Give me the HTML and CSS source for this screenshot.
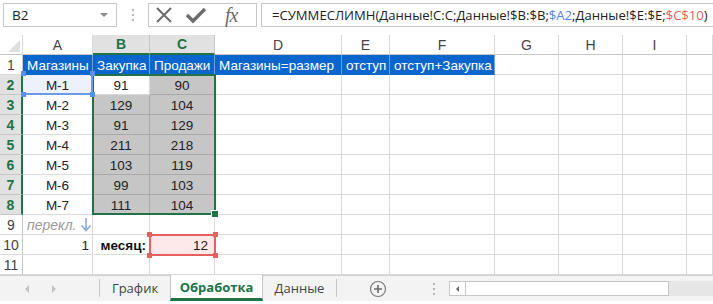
FILE: index.html
```html
<!DOCTYPE html>
<html>
<head>
<meta charset="utf-8">
<link rel="stylesheet" href="styles.css">
</head>
<body>
<div class="app">
  <div class="fbar">
    <div class="namebox"><span class="nb-text">B2</span><span class="nb-arrow"></span></div>
    <div class="vdots"><i></i><i></i><i></i></div>
    <div class="iconbox">
      <svg class="ic" width="22" height="22" viewBox="0 0 22 22"><path d="M4 4 L18 18 M18 4 L4 18" stroke="#6d6d6d" stroke-width="2" fill="none"/></svg>
      <svg class="ic" width="24" height="22" viewBox="0 0 24 22"><path d="M3 11 L9 17 L21 5" stroke="#6d6d6d" stroke-width="3.4" fill="none"/></svg>
      <span class="fx">fx</span>
    </div>
    <div class="formula">=СУММЕСЛИМН(Данные!C:C;Данные!$B:$B;<span class="ref-blue">$A2</span>;Данные!$E:$E;<span class="ref-red">$C$10</span>)</div>
  </div>

  <div class="sheet">
    <div class="grid">
      <!-- header row -->
      <div class="c hd corner"><span class="tri"></span></div>
      <div class="c hd">A</div>
      <div class="c hd sel">B</div>
      <div class="c hd sel">C</div>
      <div class="c hd">D</div>
      <div class="c hd">E</div>
      <div class="c hd">F</div>
      <div class="c hd">G</div>
      <div class="c hd">H</div>
      <div class="c hd">I</div>
      <div class="c hd last"></div>

      <!-- row 1 -->
      <div class="c rh">1</div>
      <div class="c blue">Магазины</div>
      <div class="c blue">Закупка</div>
      <div class="c blue">Продажи</div>
      <div class="c blue">Магазины=размер</div>
      <div class="c blue">отступ</div>
      <div class="c blue">отступ+Закупка</div>
      <div class="c"></div><div class="c"></div><div class="c"></div><div class="c"></div>

      <!-- row 2 -->
      <div class="c rh rsel">2</div>
      <div class="c ctr a2">М-1</div>
      <div class="c ctr">91</div>
      <div class="c ctr gr">90</div>
      <div class="c"></div><div class="c"></div><div class="c"></div><div class="c"></div><div class="c"></div><div class="c"></div><div class="c"></div>

      <!-- row 3 -->
      <div class="c rh rsel">3</div>
      <div class="c ctr">М-2</div>
      <div class="c ctr gr">129</div>
      <div class="c ctr gr">104</div>
      <div class="c"></div><div class="c"></div><div class="c"></div><div class="c"></div><div class="c"></div><div class="c"></div><div class="c"></div>

      <!-- row 4 -->
      <div class="c rh rsel">4</div>
      <div class="c ctr">М-3</div>
      <div class="c ctr gr">91</div>
      <div class="c ctr gr">129</div>
      <div class="c"></div><div class="c"></div><div class="c"></div><div class="c"></div><div class="c"></div><div class="c"></div><div class="c"></div>

      <!-- row 5 -->
      <div class="c rh rsel">5</div>
      <div class="c ctr">М-4</div>
      <div class="c ctr gr">211</div>
      <div class="c ctr gr">218</div>
      <div class="c"></div><div class="c"></div><div class="c"></div><div class="c"></div><div class="c"></div><div class="c"></div><div class="c"></div>

      <!-- row 6 -->
      <div class="c rh rsel">6</div>
      <div class="c ctr">М-5</div>
      <div class="c ctr gr">103</div>
      <div class="c ctr gr">119</div>
      <div class="c"></div><div class="c"></div><div class="c"></div><div class="c"></div><div class="c"></div><div class="c"></div><div class="c"></div>

      <!-- row 7 -->
      <div class="c rh rsel">7</div>
      <div class="c ctr">М-6</div>
      <div class="c ctr gr">99</div>
      <div class="c ctr gr">103</div>
      <div class="c"></div><div class="c"></div><div class="c"></div><div class="c"></div><div class="c"></div><div class="c"></div><div class="c"></div>

      <!-- row 8 -->
      <div class="c rh rsel">8</div>
      <div class="c ctr">М-7</div>
      <div class="c ctr gr">111</div>
      <div class="c ctr gr">104</div>
      <div class="c"></div><div class="c"></div><div class="c"></div><div class="c"></div><div class="c"></div><div class="c"></div><div class="c"></div>

      <!-- row 9 -->
      <div class="c rh">9</div>
      <div class="c note">перекл.<svg class="arr" width="12" height="15" viewBox="0 0 12 15"><path d="M6 1 V13 M1.5 8.5 L6 13.5 L10.5 8.5" stroke="#8eaad6" stroke-width="1.6" fill="none"/></svg></div>
      <div class="c"></div><div class="c"></div><div class="c"></div><div class="c"></div><div class="c"></div><div class="c"></div><div class="c"></div><div class="c"></div><div class="c"></div>

      <!-- row 10 -->
      <div class="c rh">10</div>
      <div class="c rt">1</div>
      <div class="c rt bold">месяц:</div>
      <div class="c rt pink">12</div>
      <div class="c"></div><div class="c"></div><div class="c"></div><div class="c"></div><div class="c"></div><div class="c"></div><div class="c"></div>

      <!-- row 11 -->
      <div class="c rh">11</div>
      <div class="c"></div><div class="c"></div><div class="c"></div><div class="c"></div><div class="c"></div><div class="c"></div><div class="c"></div><div class="c"></div><div class="c"></div><div class="c"></div>
    </div>

    <div class="selbox"><span class="handle"></span></div>
    <div class="refbox blue-ref"><i class="k tl"></i><i class="k tr"></i><i class="k bl"></i><i class="k br"></i></div>
    <div class="refbox red-ref"><i class="k tl"></i><i class="k tr"></i><i class="k bl"></i><i class="k br"></i></div>
  </div>

  <div class="tabs">
    <div class="nav">
      <span class="tri-l"></span>
      <span class="tri-r"></span>
    </div>
    <div class="sep"></div>
    <div class="tab">График</div>
    <div class="tab active">Обработка</div>
    <div class="tab">Данные</div>
    <div class="sep"></div>
    <div class="plus">
      <svg width="18" height="18" viewBox="0 0 18 18"><circle cx="9" cy="9" r="7.5" fill="none" stroke="#7a7a7a" stroke-width="1.2"/><path d="M9 5 V13 M5 9 H13" stroke="#6a6a6a" stroke-width="1.6"/></svg>
    </div>
    <div class="hdots"><i></i><i></i><i></i></div>
    <div class="scroll">
      <div class="sc-track"><span class="sc-btn"><span class="tri-s"></span></span></div>
      <div class="sc-rest"></div>
    </div>
  </div>
</div>
</body>
</html>
```

FILE: styles.css
```css
html, body {
  margin: 0;
  padding: 0;
  background: #ffffff;
  overflow: hidden;
}
.app {
  width: 713px;
  height: 304px;
  display: flex;
  flex-direction: column;
  font-family: "Liberation Sans", Arial, sans-serif;
  color: #222;
}

/* formula bar */
.fbar {
  display: flex;
  align-items: flex-start;
  padding: 3px 0 0 3px;
  height: 35px;
  box-sizing: border-box;
  white-space: nowrap;
}
.namebox {
  width: 114px;
  height: 24px;
  box-sizing: border-box;
  border: 1px solid #c6c6c6;
  display: flex;
  align-items: center;
  justify-content: space-between;
  padding: 0 8px 0 8px;
  font-family: "Open Sans", sans-serif;
  font-size: 13.5px;
  color: #222;
}
.nb-arrow {
  width: 0; height: 0;
  border-left: 4px solid transparent;
  border-right: 4px solid transparent;
  border-top: 4px solid #8a8a8a;
}
.vdots {
  width: 31px;
  height: 24px;
  display: flex;
  flex-direction: column;
  align-items: center;
  justify-content: center;
  gap: 3px;
}
.vdots i, .hdots i {
  display: block;
  width: 2px; height: 2px;
  background: #b5b5b5;
}
.iconbox {
  width: 109px;
  height: 24px;
  box-sizing: border-box;
  border: 1px solid #c6c6c6;
  display: flex;
  align-items: center;
  padding-left: 4px;
  gap: 9px;
}
.fx {
  font-family: "Liberation Serif", serif;
  font-style: italic;
  font-size: 20px;
  color: #6d6d6d;
  margin-left: 8px;
  letter-spacing: -1px;
}
.formula {
  margin-left: 4px;
  height: 24px;
  flex: 1;
  box-sizing: border-box;
  border: 1px solid #c6c6c6;
  border-right: none;
  padding: 0 0 0 10px;
  font-family: "Open Sans", sans-serif;
  font-size: 13.1px;
  line-height: 22px;
  color: #222;
  overflow: hidden;
}
.ref-blue { color: #4d86e8; }
.ref-red { color: #e95b5b; }

/* sheet */
.sheet {
  position: relative;
  height: 240px;
  overflow: hidden;
}
.grid {
  display: grid;
  grid-template-columns: 23px 70px 57px 65px 127px 48px 105px 64px 64px 64px 1fr;
  grid-auto-rows: 20px;
  font-size: 13.5px;
}
.c {
  box-sizing: border-box;
  border-right: 1px solid #dadada;
  border-bottom: 1px solid #dadada;
  line-height: 21px;
  padding: 0 3px;
  white-space: nowrap;
  overflow: visible;
}
.hd {
  text-align: center;
  color: #444;
  border-bottom-color: #c6c6c6;
  border-right-color: #dadada;
  font-size: 14px;
  line-height: 20px;
}
.hd.sel {
  background: #e1e1e1;
  color: #217346;
  font-weight: bold;
  border-bottom: 2px solid #217346;
  border-right-color: #c6c6c6;
  line-height: 19px;
}
.corner {
  position: relative;
}
.tri {
  position: absolute;
  right: 2px;
  bottom: 2px;
  width: 0; height: 0;
  border-left: 12px solid transparent;
  border-bottom: 12px solid #dfdfdf;
}
.rh {
  text-align: center;
  color: #444;
  padding: 0;
  font-size: 14px;
  border-right-color: #c6c6c6;
}
.rh.rsel {
  background: #e1e1e1;
  color: #217346;
  font-weight: bold;
  border-right: 2px solid #217346;
  border-bottom-color: #c6c6c6;
}
.blue {
  background: #0a66cc;
  color: #ffffff;
  border-right-color: #6ea2dd;
  border-bottom-color: #0a66cc;
  padding-left: 4px;
}
.ctr { text-align: center; }
.rt { text-align: right; }
.bold { font-weight: bold; color: #111; }
.gr {
  background: #c6c6c6;
  border-right-color: #a9a9a9;
  border-bottom-color: #a9a9a9;
}
.a2 { background: #edf1fb; }
.pink { background: #fde9e9; padding-right: 6px; }
.note {
  font-style: italic;
  color: #9a9a9a;
  padding-left: 4px;
  font-size: 14px;
}
.arr {
  margin-left: 4px;
  vertical-align: -2px;
}

.selbox {
  position: absolute;
  left: 92px;
  top: 39px;
  width: 124px;
  height: 141px;
  box-sizing: border-box;
  border: 2px solid #217346;
}
.handle {
  position: absolute;
  right: -5px;
  bottom: -5px;
  width: 6px; height: 6px;
  background: #217346;
  border: 1px solid #ffffff;
}
.refbox {
  position: absolute;
  box-sizing: border-box;
}
.blue-ref {
  left: 23px;
  top: 39px;
  width: 70px;
  height: 21px;
  border: 2px solid #6b9ae8;
  border-left: none;
  border-top: none;
}
.red-ref {
  left: 149px;
  top: 199px;
  width: 67px;
  height: 22px;
  border: 2px solid #e85f5f;
}
.k {
  position: absolute;
  width: 5px; height: 5px;
}
.blue-ref .k { background: #5b8fea; }
.red-ref .k { background: #e85f5f; }
.blue-ref .tl { left: -2px; top: -3px; }
.blue-ref .tr { right: -4px; top: -3px; }
.blue-ref .bl { left: -2px; bottom: -4px; }
.blue-ref .br { right: -4px; bottom: -4px; }
.red-ref .tl { left: -4px; top: -4px; }
.red-ref .tr { right: -4px; top: -4px; }
.red-ref .bl { left: -4px; bottom: -4px; }
.red-ref .br { right: -4px; bottom: -4px; }

/* tabs */
.tabs {
  height: 26px;
  box-sizing: border-box;
  border-top: 1px solid #d0d0d0;
  background: #f3f3f3;
  display: flex;
  align-items: stretch;
  font-family: "Open Sans", sans-serif;
  font-size: 13px;
  color: #444;
  white-space: nowrap;
}
.nav {
  width: 99px;
  display: flex;
  align-items: center;
  padding-left: 25px;
  gap: 23px;
  box-sizing: border-box;
}
.tri-l {
  width: 0; height: 0;
  border-top: 4px solid transparent;
  border-bottom: 4px solid transparent;
  border-right: 4px solid #c3c3c3;
}
.tri-r {
  width: 0; height: 0;
  border-top: 4px solid transparent;
  border-bottom: 4px solid transparent;
  border-left: 4px solid #c3c3c3;
}
.sep {
  width: 1px;
  background: #c6c6c6;
  margin: 3px 0 4px 0;
}
.tab {
  display: flex;
  align-items: center;
  justify-content: center;
  padding: 0 0 1px 0;
}
.tabs .tab { width: 70px; }
.tabs .tab.active {
  width: 93px;
  box-sizing: border-box;
  background: #ffffff;
  color: #217346;
  font-weight: bold;
  border-left: 1px solid #c6c6c6;
  border-right: 1px solid #c6c6c6;
  border-bottom: 3px solid #217346;
  margin-top: -1px;
  padding-bottom: 0;
}
.tabs .tab.active + .tab { width: 73px; }
.plus {
  width: 82px;
  display: flex;
  align-items: center;
  justify-content: center;
}
.hdots {
  width: 30px;
  display: flex;
  flex-direction: column;
  align-items: center;
  justify-content: center;
  gap: 3px;
}
.scroll {
  flex: 1;
  display: flex;
  align-items: center;
}
.sc-track {
  width: 220px;
  height: 15px;
  box-sizing: border-box;
  border: 1px solid #c6c6c6;
  background: #ffffff;
  display: flex;
}
.sc-btn {
  width: 15px;
  border-right: 1px solid #c6c6c6;
  display: flex;
  align-items: center;
  justify-content: center;
}
.tri-s {
  width: 0; height: 0;
  border-top: 3px solid transparent;
  border-bottom: 3px solid transparent;
  border-right: 3px solid #666;
}
.sc-rest {
  flex: 1;
  height: 15px;
  background: #e6e6e6;
}
```
